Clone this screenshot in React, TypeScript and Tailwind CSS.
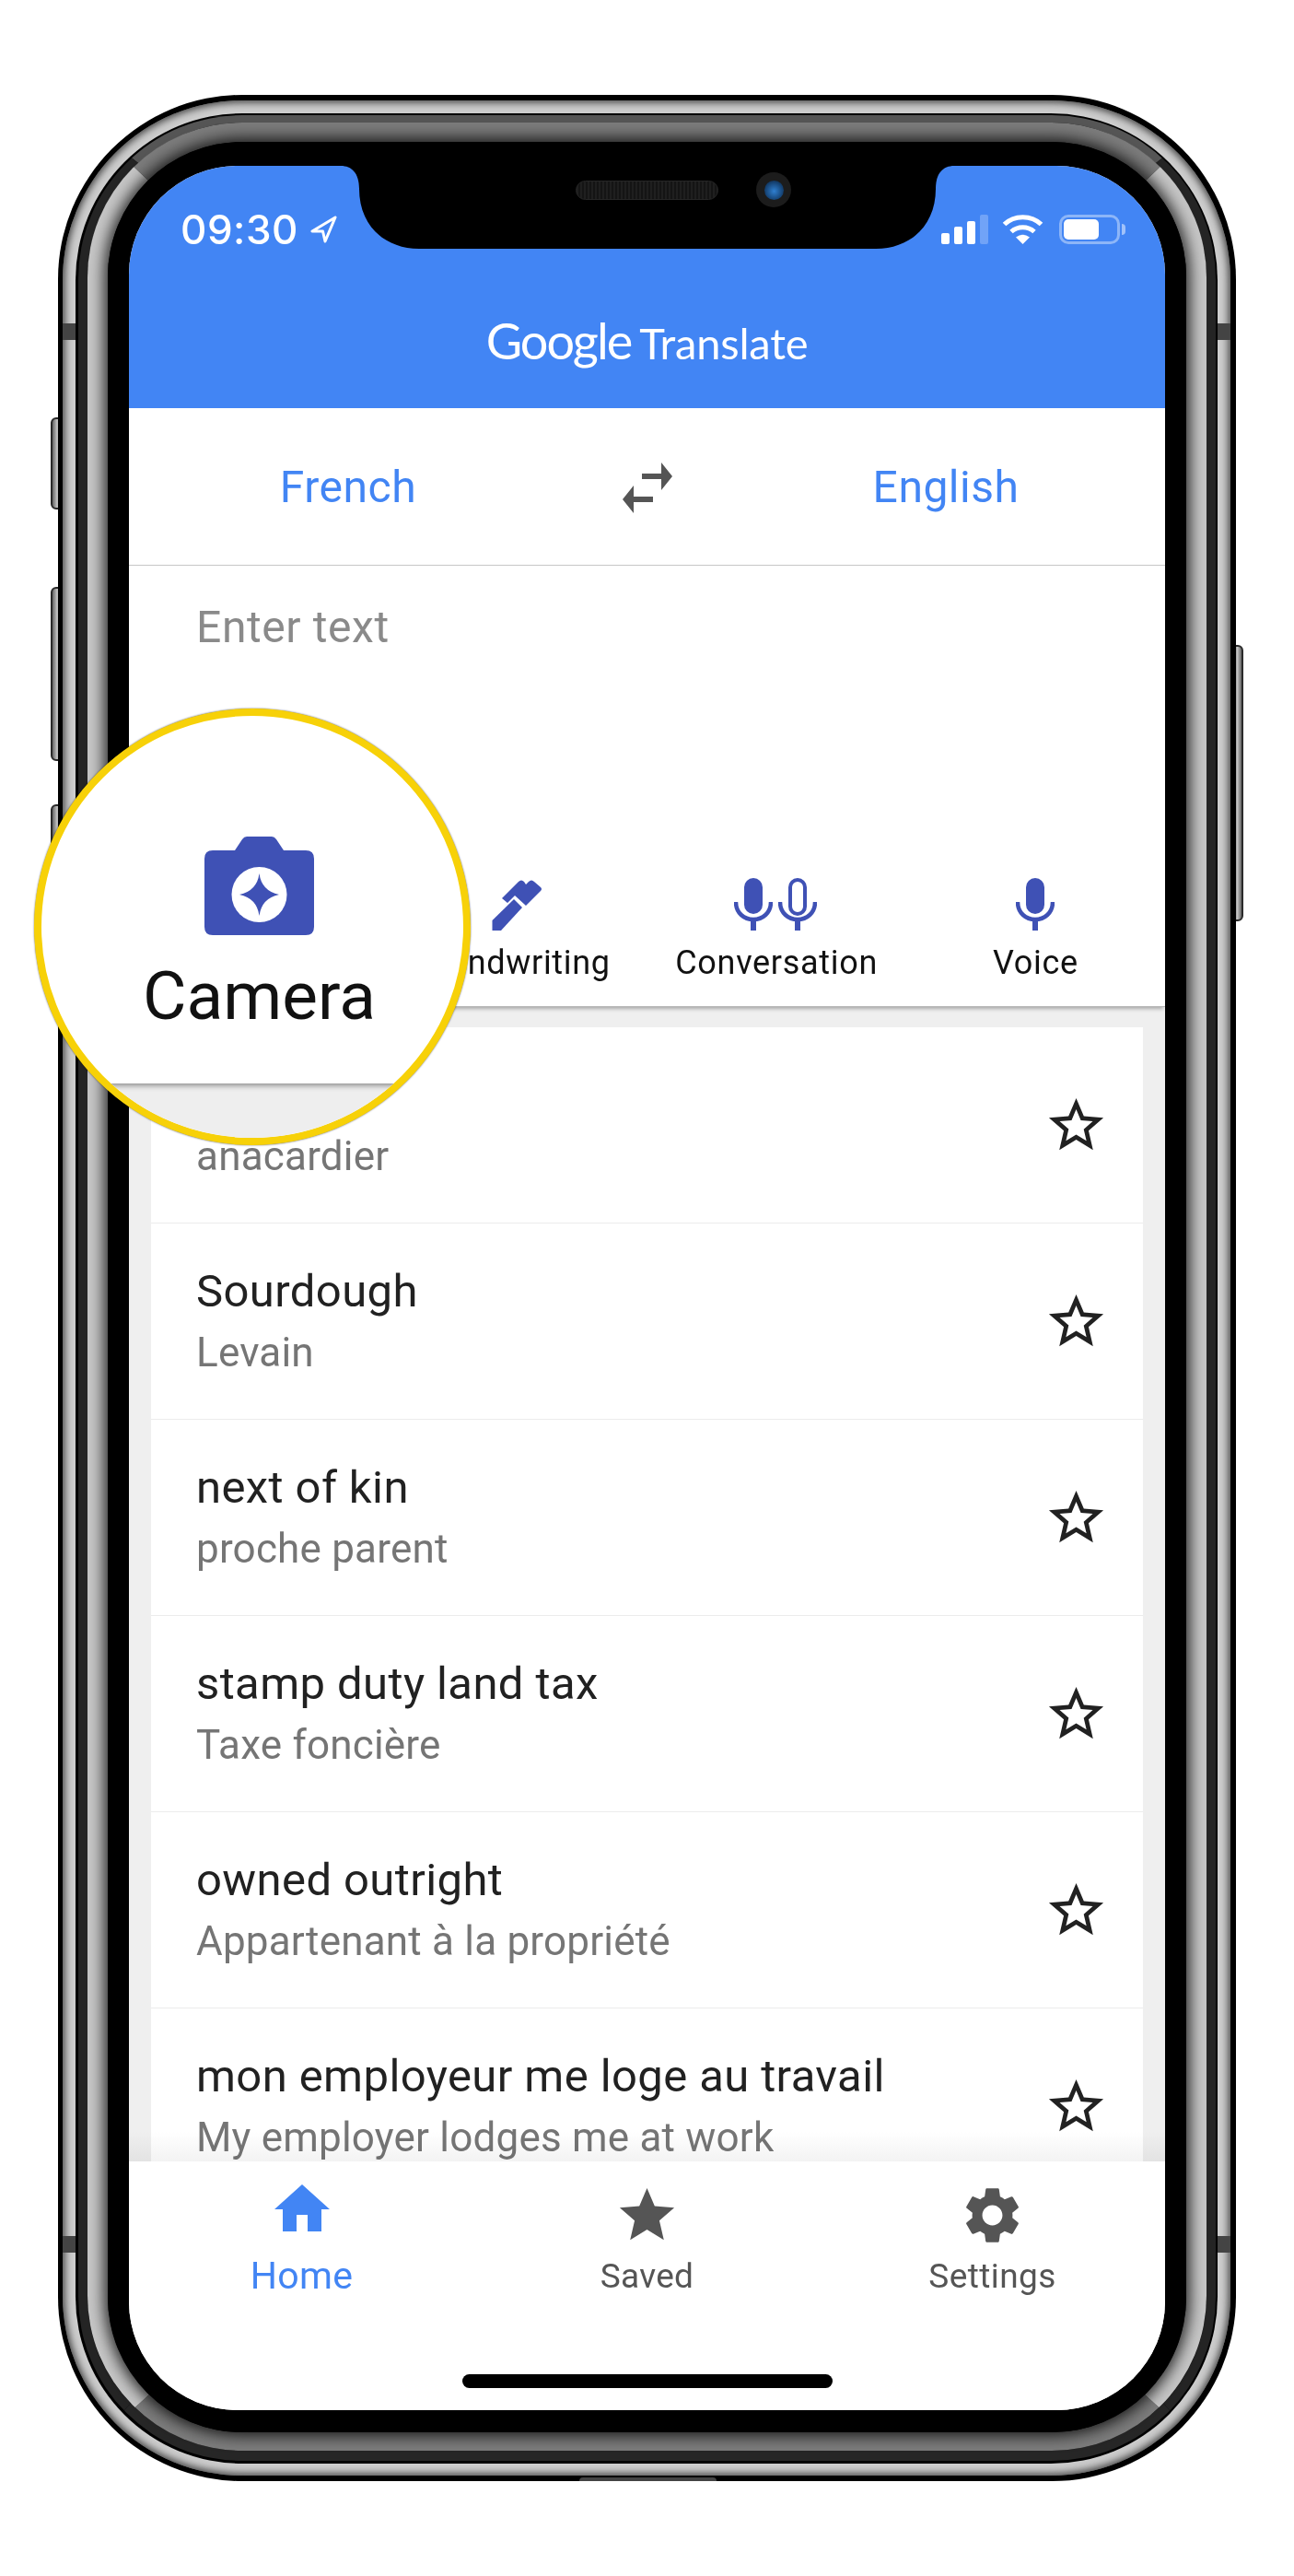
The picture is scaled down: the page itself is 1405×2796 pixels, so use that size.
const words = [
  { title: "\u00a0", sub: "anacardier" },
  { title: "Sourdough", sub: "Levain" },
  { title: "next of kin", sub: "proche parent" },
  { title: "stamp duty land tax", sub: "Taxe foncière" },
  { title: "owned outright", sub: "Appartenant à la propriété" },
  { title: "mon employeur me loge au travail", sub: "My employer lodges me at work" },
];

function CameraIcon({ className }: { className: string }) {
  return (
    <svg viewBox="0 0 119 107" className={className}>
      <path
        fill="#3f51b5"
        d="M46 0H73Q76 0 78 3L86 15H110Q119 15 119 24V98Q119 107 110 107H9Q0 107 0 98V24Q0 15 9 15H33L41 3Q43 0 46 0Z"
      />
      <circle cx="59.5" cy="63" r="30" fill="#fff" />
      <path fill="#3f51b5" d="M59.5 40Q62 59 81 63Q62 67 59.5 86Q57 67 38 63Q57 59 59.5 40Z" />
    </svg>
  );
}

function PenIcon() {
  return (
    <svg viewBox="0 0 80 75" className="w-[80px] h-[75px] -my-[9px]">
      <path fill="#3f51b5" d="M12.5 66V55L36 32L45 41L22 66Z" />
      <path
        fill="#3f51b5"
        d="M23 31L41 13Q44 10 47 13L49 16L52 13Q55 10 58 13L65 19Q67 21 65 23L49 39L37 28L44 21L29 36Z"
      />
    </svg>
  );
}

function Mic({ outline }: { outline?: boolean }) {
  return (
    <svg viewBox="0 0 42 57" className="w-[42px] h-[57px]">
      {outline ? (
        <rect x="13" y="2" width="16" height="37" rx="8" fill="none" stroke="#3f51b5" strokeWidth="4" />
      ) : (
        <rect x="11" y="0" width="20" height="39" rx="10" fill="#3f51b5" />
      )}
      <path d="M2 26C2 38 11 45 21 45C31 45 40 38 40 26" fill="none" stroke="#3f51b5" strokeWidth="4.5" />
      <rect x="18" y="44" width="6" height="13" fill="#3f51b5" />
    </svg>
  );
}

function StarOutline() {
  return (
    <svg viewBox="0 0 24 24" className="w-[71px] h-[71px]" fill="#212121">
      <path d="M22 9.24l-7.19-.62L12 2 9.19 8.63 2 9.24l5.46 4.73L5.82 21 12 17.27 18.18 21l-1.63-7.03L22 9.24zM12 15.4l-3.76 2.27 1-4.28-3.32-2.88 4.38-.38L12 6.1l1.71 4.04 4.38.38-3.32 2.88 1 4.28L12 15.4z" />
    </svg>
  );
}

function StatusBar() {
  return (
    <div className="flex items-center justify-between h-[38px] pl-[56px] pr-[43px] text-white">
      <div className="flex items-center gap-[12px]">
        <span className="font-['Inter',sans-serif] text-[44px] leading-[38px] font-medium tracking-[0.5px]">09:30</span>
        <svg viewBox="0 0 30 30" className="w-[30px] h-[30px]">
          <path d="M28 2L3 17L14.5 17L17 28Z" fill="none" stroke="#fff" strokeWidth="3" strokeLinejoin="round" />
        </svg>
      </div>
      <div className="flex items-center">
        <div className="flex items-end gap-[5px] h-[32px]">
          <div className="w-[9px] h-[12px] rounded-[2px] bg-white" />
          <div className="w-[9px] h-[19px] rounded-[2px] bg-white" />
          <div className="w-[9px] h-[25px] rounded-[2px] bg-white" />
          <div className="w-[9px] h-[32px] rounded-[2px] bg-white/25" />
        </div>
        <svg viewBox="0 0 45 32" className="w-[45px] h-[32px] ml-[15px]">
          <path d="M2.5 10.5C13 0 32 0 42.5 10.5" fill="none" stroke="#fff" strokeWidth="5" />
          <path d="M10 18.5C17 12 28 12 35 18.5" fill="none" stroke="#fff" strokeWidth="5" />
          <path d="M15 24.5Q22.5 19 30 24.5L22.5 32Z" fill="#fff" />
        </svg>
        <div className="flex items-center ml-[17px]">
          <div className="w-[66px] h-[32px] rounded-[10px] border-[3px] border-white/40 p-[2px] pr-[20px]">
            <div className="w-full h-full rounded-[5px] bg-white" />
          </div>
          <div className="w-[4px] h-[12px] ml-[2px] rounded-r-[4px] bg-white/50" />
        </div>
      </div>
    </div>
  );
}

function Notch() {
  return (
    <div className="absolute left-[230px] top-0 w-[666px] h-[90px]">
      <svg viewBox="0 0 666 90" className="w-full h-full">
        <path d="M0 0C12 0 20 8 20 25C20 65 48 90 85 90L581 90C618 90 646 65 646 25C646 8 654 0 666 0Z" fill="#000" />
      </svg>
      {/* speaker + front camera */}
      <div className="absolute left-[255px] top-[16px] w-[155px] h-[21px] rounded-full border border-[#262626] bg-[repeating-linear-gradient(90deg,#1f1f1f_0_2px,#141414_2px_4px)]" />
      <div className="absolute left-[451px] top-[7px] w-[38px] h-[38px] rounded-full bg-[#1c1c1c] flex items-center justify-center">
        <div className="w-[21px] h-[21px] rounded-full bg-[radial-gradient(circle_at_50%_55%,#2f7fd0,#123a66_70%)]" />
      </div>
    </div>
  );
}

function Screen() {
  return (
    <div className="relative flex flex-col h-full rounded-[118px] overflow-hidden bg-white">
      {/* HEADER */}
      <div className="h-[263px] shrink-0 bg-[#4285f4] pt-[50px]">
        <StatusBar />
        <div className="flex items-baseline justify-center mt-[70px] text-white font-['Lato',sans-serif] leading-[64px]">
          <span className="text-[54px] tracking-[-2px]">Google</span>
          <span className="text-[47px] ml-[9px] tracking-[-0.2px]">Translate</span>
        </div>
      </div>
      <Notch />

      {/* LANGUAGES */}
      <div className="h-[171px] shrink-0 grid grid-cols-[476px_173px_476px] items-center border-b border-[#c6c6c6] text-[48px] tracking-[0.5px] text-[#4285f4]">
        <div className="text-center pt-[2px]">French</div>
        <svg viewBox="0 0 173 60" className="w-[173px] h-[60px]">
          <path fill="#555" d="M81 27V21H102V9L114 24L102 39V27Z" transform="translate(0 -5)" />
          <path fill="#555" d="M93 36V42H72V54L60 39L72 24V36Z" transform="translate(0 5)" />
        </svg>
        <div className="text-center pt-[2px]">English</div>
      </div>

      {/* INPUT */}
      <div className="h-[327px] shrink-0 pt-[39px] pl-[73px] text-[48px] leading-[56px] tracking-[0.6px] text-[#8a8a8a]">Enter text</div>

      {/* TOOLS, the first slot sits under the magnifier */}
      <div className="relative z-10 h-[152px] shrink-0 grid grid-cols-4 pt-[12px] border-b border-[#b8b8b8] shadow-[0_4px_4px_-2px_rgba(0,0,0,0.3)] bg-white text-[36px] leading-[44px] tracking-[0.7px] text-[#111]">
        <div />
        <div className="flex flex-col items-center">
          <div className="h-[57px] flex items-center">
            <PenIcon />
          </div>
          <span className="mt-[13px]">Handwriting</span>
        </div>
        <div className="flex flex-col items-center">
          <div className="h-[57px] flex items-center gap-[6px] -ml-[3px]">
            <Mic />
            <Mic outline />
          </div>
          <span className="mt-[13px]">Conversation</span>
        </div>
        <div className="flex flex-col items-center">
          <div className="h-[57px] flex items-center">
            <Mic />
          </div>
          <span className="mt-[13px]">Voice</span>
        </div>
      </div>

      {/* SAVED LIST */}
      <div className="relative flex-1 overflow-hidden bg-[#efefef] pt-[22px] px-[24px]">
        <div className="bg-white">
          {words.map((w) => (
            <div key={w.sub} className="h-[213px] flex items-center justify-between border-b border-[#ececec] pl-[49px] pr-[37px]">
              <div className="mb-[2px]">
                <p className="text-[49px] leading-[56px] tracking-[0.4px] text-[#212121]">{w.title}</p>
                <p className="mt-[13px] text-[44px] leading-[50px] tracking-[0.2px] text-[#757575]">{w.sub}</p>
              </div>
              <StarOutline />
            </div>
          ))}
        </div>
        <div className="absolute left-0 right-0 bottom-0 h-[32px] bg-gradient-to-b from-white to-[#f3f3f3] mix-blend-multiply" />
      </div>

      {/* BOTTOM NAV */}
      <div className="relative h-[270px] shrink-0 grid grid-cols-3 bg-white">
        <div className="flex flex-col items-center pt-[16px] text-[#4285f4]">
          <svg viewBox="0 0 24 24" className="w-[72px] h-[72px]" fill="#4285f4">
            <path d="M10 20v-6h4v6h5v-8h3L12 3 2 12h3v8z" />
          </svg>
          <span className="mt-[12px] text-[41px] leading-[48px] tracking-[0.3px]">Home</span>
        </div>
        <div className="flex flex-col items-center pt-[23px] text-[#555]">
          <svg viewBox="0 0 24 24" className="w-[71px] h-[71px]" fill="#555">
            <path d="M12 17.27L18.18 21l-1.64-7.03L22 9.24l-7.19-.61L12 2 9.19 8.63 2 9.24l5.46 4.73L5.82 21z" />
          </svg>
          <span className="mt-[7px] text-[37px] leading-[48px] tracking-[0.3px]">Saved</span>
        </div>
        <div className="flex flex-col items-center pt-[22px] text-[#555]">
          <svg viewBox="0 0 24 24" className="w-[73px] h-[73px]" fill="#555">
            <path d="M19.14 12.94c.04-.3.06-.61.06-.94 0-.32-.02-.64-.07-.94l2.03-1.58c.18-.14.23-.41.12-.61l-1.92-3.32c-.12-.22-.37-.29-.59-.22l-2.39.96c-.5-.38-1.03-.7-1.62-.94l-.36-2.54c-.04-.24-.24-.41-.48-.41h-3.84c-.24 0-.43.17-.47.41l-.36 2.54c-.59.24-1.13.57-1.62.94l-2.39-.96c-.22-.08-.47 0-.59.22L2.74 8.87c-.12.21-.08.47.12.61l2.03 1.58c-.05.3-.09.63-.09.94s.02.64.07.94l-2.03 1.58c-.18.14-.23.41-.12.61l1.92 3.32c.12.22.37.29.59.22l2.39-.96c.5.38 1.03.7 1.62.94l.36 2.54c.05.24.24.41.48.41h3.84c.24 0 .44-.17.47-.41l.36-2.54c.59-.24 1.13-.56 1.62-.94l2.39.96c.22.08.47 0 .59-.22l1.92-3.32c.12-.22.07-.47-.12-.61l-2.01-1.58zM12 15.6c-1.98 0-3.6-1.62-3.6-3.6s1.62-3.6 3.6-3.6 3.6 1.62 3.6 3.6-1.62 3.6-3.6 3.6z" />
          </svg>
          <span className="mt-[6px] text-[37px] leading-[48px] tracking-[0.4px]">Settings</span>
        </div>
        <div className="absolute left-[362px] bottom-[24px] w-[402px] h-[15px] rounded-full bg-black" />
      </div>
    </div>
  );
}

function Magnifier() {
  return (
    <div className="absolute z-20 left-[37px] top-[769px] w-[474px] h-[474px] rounded-full border-[8px] border-[#f7d108] shadow-[0_0_2px_rgba(0,0,0,0.6)] overflow-hidden bg-white flex flex-col items-center pl-[15px]">
      <CameraIcon className="w-[119px] h-[107px] mt-[131px] shrink-0" />
      <span className="mt-[26px] text-[73px] leading-[80px] text-[#111] blur-[0.6px]">Camera</span>
      <div className="absolute left-0 right-0 top-[399px] bottom-0 bg-[#eeeeee] shadow-[inset_0_5px_6px_-3px_rgba(0,0,0,0.45)]" />
    </div>
  );
}

export default function App() {
  return (
    <div className="relative w-[1405px] h-[2796px] bg-white pt-[103px] pl-[63px] font-['Roboto',sans-serif]">
      {/* side buttons */}
      <div className="absolute left-[55px] top-[453px] w-[14px] h-[100px] rounded-l-[6px] border-2 border-[#2a2a2a] bg-gradient-to-r from-[#666] via-[#c4c4c4] to-[#666]" />
      <div className="absolute left-[55px] top-[637px] w-[14px] h-[189px] rounded-l-[6px] border-2 border-[#2a2a2a] bg-gradient-to-r from-[#666] via-[#c4c4c4] to-[#666]" />
      <div className="absolute left-[55px] top-[873px] w-[14px] h-[189px] rounded-l-[6px] border-2 border-[#2a2a2a] bg-gradient-to-r from-[#666] via-[#c4c4c4] to-[#666]" />
      <div className="absolute left-[1337px] top-[700px] w-[13px] h-[300px] rounded-r-[6px] border-2 border-[#2a2a2a] bg-gradient-to-r from-[#666] via-[#c4c4c4] to-[#666]" />

      {/* phone body, nested rims */}
      <div className="relative z-10 w-[1279px] h-[2590px] rounded-[200px] bg-black pt-[6px] pb-[6px] pl-[5px] pr-[6px]">
        <div className="relative h-full rounded-[195px] bg-[#cdcdcd] shadow-[inset_0_0_8px_2px_rgba(30,30,30,0.85)] pt-[14px] pb-[13px] px-[14px]">
          <div className="absolute left-0 top-[242px] w-[14px] h-[18px] bg-[#444]" />
          <div className="absolute right-0 top-[242px] w-[14px] h-[18px] bg-[#444]" />
          <div className="absolute left-0 top-[2318px] w-[14px] h-[18px] bg-[#444]" />
          <div className="absolute right-0 top-[2318px] w-[14px] h-[18px] bg-[#444]" />
          <div className="h-full rounded-[181px] bg-black pt-[2px] pb-[3px] pl-[3px] pr-[2px]">
            <div className="h-full rounded-[178px] border-x-[10px] border-t-[8px] border-b-[11px] border-x-[#242424] border-t-[#555] border-b-[#262626]">
              <div className="h-full rounded-[168px] border-x-[22px] border-t-[21px] border-b-[20px] border-x-[#c6c6c6] border-y-[#7c7c7c]">
                <div className="h-full rounded-[146px] bg-black pt-[26px] pb-[24px] px-[23px] shadow-[0_0_16px_4px_rgba(0,0,0,0.8)]">
                  <Screen />
                </div>
              </div>
            </div>
          </div>
        </div>
        <div className="absolute left-[566px] bottom-0 w-[149px] h-[4px] rounded-t-[4px] bg-[#444]" />
      </div>

      <Magnifier />
    </div>
  );
}
